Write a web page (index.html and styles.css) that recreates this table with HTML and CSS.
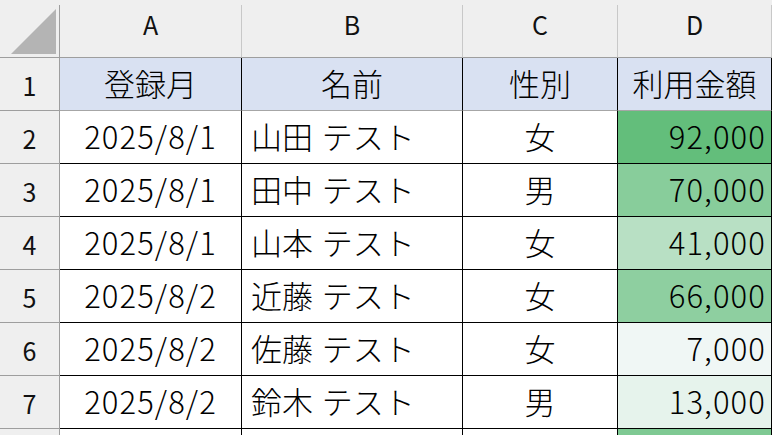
FILE: index.html
```html
<!DOCTYPE html>
<html lang="ja">
<head>
<meta charset="utf-8">
<title>Sheet</title>
<link rel="stylesheet" href="styles.css">
</head>
<body>
<div class="sheet">
  <div class="corner"><svg width="59" height="52" viewBox="0 0 59 52"><polygon points="11,49 56,4 56,49" fill="#b4b4b4"/></svg></div>
  <div class="ch">A</div>
  <div class="ch">B</div>
  <div class="ch">C</div>
  <div class="ch">D</div>

  <div class="rh">1</div>
  <div class="c title">登録月</div>
  <div class="c title">名前</div>
  <div class="c title">性別</div>
  <div class="c title">利用金額</div>

  <div class="rh">2</div>
  <div class="c ctr num">2025/8/1</div>
  <div class="c lft">山田 テスト</div>
  <div class="c ctr">女</div>
  <div class="c rgt num" style="background:#63be7b">92,000</div>

  <div class="rh">3</div>
  <div class="c ctr num">2025/8/1</div>
  <div class="c lft">田中 テスト</div>
  <div class="c ctr">男</div>
  <div class="c rgt num" style="background:#88cd9b">70,000</div>

  <div class="rh">4</div>
  <div class="c ctr num">2025/8/1</div>
  <div class="c lft">山本 テスト</div>
  <div class="c ctr">女</div>
  <div class="c rgt num" style="background:#b8e0c4">41,000</div>

  <div class="rh">5</div>
  <div class="c ctr num">2025/8/2</div>
  <div class="c lft">近藤 テスト</div>
  <div class="c ctr">女</div>
  <div class="c rgt num" style="background:#8ecfa0">66,000</div>

  <div class="rh">6</div>
  <div class="c ctr num">2025/8/2</div>
  <div class="c lft">佐藤 テスト</div>
  <div class="c ctr">女</div>
  <div class="c rgt num" style="background:#f0f7f5">7,000</div>

  <div class="rh">7</div>
  <div class="c ctr num">2025/8/2</div>
  <div class="c lft">鈴木 テスト</div>
  <div class="c ctr">男</div>
  <div class="c rgt num" style="background:#e6f3ec">13,000</div>

  <div class="rh"></div>
  <div class="c"></div>
  <div class="c"></div>
  <div class="c"></div>
  <div class="c" style="background:#7fc993"></div>
</div>
</body>
</html>
```

FILE: styles.css
```css
* { box-sizing: border-box; }
html, body {
  margin: 0;
  padding: 0;
  background: #efefef;
  overflow: hidden;
}
body {
  width: 772px;
  height: 435px;
  font-family: "Noto Sans CJK JP", "Noto Sans", sans-serif;
  color: #000;
}
.sheet {
  padding-top: 5px;
  display: grid;
  grid-template-columns: 60px 182px 221px 155px 154px;
  grid-template-rows: 53px repeat(7, 53px) 20px;
  height: 435px;
  overflow: hidden;
}
.corner {
  border-right: 1px solid #9e9e9e;
  border-bottom: 1px solid #9e9e9e;
  display: flex;
  align-items: flex-start;
}
.corner svg { display: block; }
.ch {
  border-right: 1px solid #c8c8c8;
  border-bottom: 1px solid #9e9e9e;
  display: flex;
  align-items: center;
  justify-content: center;
  font-size: 25px;
  font-weight: 400;
  padding-bottom: 14px;
  color: #111;
}
.rh {
  border-right: 1px solid #9e9e9e;
  border-bottom: 1px solid #9e9e9e;
  display: flex;
  align-items: center;
  justify-content: center;
  font-size: 25px;
  font-weight: 400;
  padding-top: 2px;
  color: #111;
}
.c {
  background: #fff;
  border-right: 1px solid #000;
  border-bottom: 1px solid #000;
  display: flex;
  align-items: center;
  font-size: 31px;
  font-weight: 300;
  white-space: nowrap;
  padding-bottom: 4px;
}
.num { letter-spacing: 1.1px; }
.title {
  background: #d9e1f2;
  border-bottom-color: #a6a6a6;
  justify-content: center;
}
.ctr { justify-content: center; }
.lft { justify-content: flex-start; padding-left: 9px; word-spacing: 2px; }
.rgt { justify-content: flex-end; padding-right: 5px; }
```
